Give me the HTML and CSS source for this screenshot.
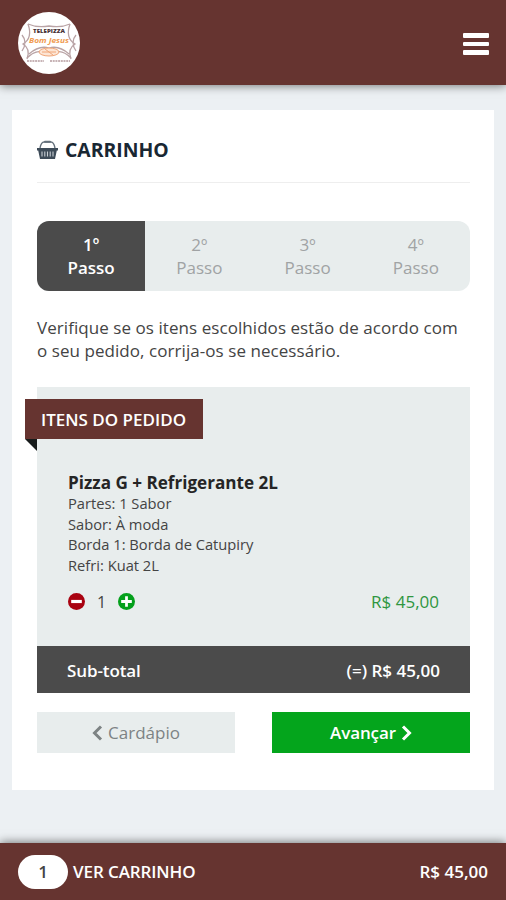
FILE: index.html
```html
<!DOCTYPE html>
<html lang="pt-br">

<head>
    <meta charset="utf-8">
    <title>Carrinho</title>
    <link rel="stylesheet" href="styles.css">
</head>

<body>
    <header class="topbar">
        <svg class="logo" viewBox="0 0 64 64">
            <circle cx="32" cy="32" r="31" fill="#fff"/>
            <g fill="none" stroke="#b9a3a5" stroke-width="1.3">
                <path d="M11 13 Q20 17 32 15 Q44 17 53 13"/>
                <path d="M11 13 Q16 27 6 33 Q14 38 10 48"/>
                <path d="M53 13 Q48 27 58 33 Q50 38 54 48"/>
                <path d="M5 24 Q11 31 5 40 M59 24 Q53 31 59 40"/>
                <path d="M12 43 Q22 34 32 37 Q42 34 52 43"/>
                <path d="M10 47 Q21 36 29 44 M54 47 Q43 36 35 44"/>
            </g>
            <ellipse cx="32" cy="41" rx="10" ry="4" fill="#fde5d4" stroke="#f0a678"/>
            <path d="M25 41h14M28 38l8 6" stroke="#f0a678"/>
            <text class="logo-top" x="32" y="22" textLength="32" lengthAdjust="spacingAndGlyphs" text-anchor="middle">TELEPIZZA</text>
            <text class="logo-name" x="32" y="32" textLength="40" lengthAdjust="spacingAndGlyphs" text-anchor="middle">Bom Jesus</text>
            <path d="M10 50h17M33 50h20" stroke="#b59b9e" stroke-width="1.6" stroke-dasharray="2 .7"/>
        </svg>
        <div class="menu">
            <span></span>
            <span></span>
            <span></span>
        </div>
    </header>

    <main class="cart">
        <h1>
            <svg class="basket" viewBox="0 0 21 20">
                <path d="M3 8C4 3 6 2 7 2h7c1 0 3 1 4 6" fill="none" stroke="#65717c" stroke-width="1.4"/>
                <rect x="7" y="0.7" width="7" height="2" rx="1" fill="#65717c"/>
                <path d="M0 8h21v2.4h-1.2L18 19H3L1.2 10.4H0z" fill="#3d4b58"/>
                <path d="M5 11.5v5M7.8 11.5v5M10.5 11.5v5M13.2 11.5v5M16 11.5v5" stroke="#c8ced3" stroke-width="1.1"/>
            </svg>
            <span>CARRINHO</span>
        </h1>

        <div class="steps">
            <div class="step active">1º<br>Passo</div>
            <div class="step">2º<br>Passo</div>
            <div class="step">3º<br>Passo</div>
            <div class="step">4º<br>Passo</div>
        </div>

        <p class="intro">Verifique se os itens escolhidos estão de acordo com o seu pedido, corrija-os se necessário.</p>

        <section class="order">
            <h2 class="ribbon"><span>ITENS DO PEDIDO</span></h2>
            <div class="item">
                <h3>Pizza G + Refrigerante 2L</h3>
                <ul>
                    <li>Partes: 1 Sabor</li>
                    <li>Sabor: À moda</li>
                    <li>Borda 1: Borda de Catupiry</li>
                    <li>Refri: Kuat 2L</li>
                </ul>
                <div class="item-row">
                    <div class="quantity">
                        <svg viewBox="0 0 16 16">
                            <circle cx="8" cy="8" r="8" fill="#a90311"/>
                            <path d="M3 8h10" stroke="#fff" stroke-width="3"/>
                        </svg>
                        <span>1</span>
                        <svg viewBox="0 0 16 16">
                            <circle cx="8" cy="8" r="8" fill="#04a01c"/>
                            <path d="M3 8h10M8 3v10" stroke="#fff" stroke-width="2.6"/>
                        </svg>
                    </div>
                    <span class="price">R$ 45,00</span>
                </div>
            </div>
            <div class="subtotal">
                <span class="subtotal-label">Sub-total</span>
                <span class="subtotal-value">(=) R$ 45,00</span>
            </div>
        </section>

        <div class="btn-group">
            <button class="back">
                <svg viewBox="0 0 11 16"><path d="M9 1.5L2.5 8L9 14.5"/></svg>
                <span>Cardápio</span>
            </button>
            <button class="next">
                <span>Avançar</span>
                <svg viewBox="0 0 11 16"><path d="M2 1.5L8.5 8L2 14.5"/></svg>
            </button>
        </div>
    </main>

    <footer class="bottombar">
        <span class="count">1</span>
        <span class="view-cart">VER CARRINHO</span>
        <span class="total">R$ 45,00</span>
    </footer>
</body>

</html>
```
FILE: styles.css
```css
* {
    box-sizing: border-box;
}

body {
    margin: 0;
    height: 900px;
    display: flex;
    flex-direction: column;
    overflow: hidden;
    background-color: #ecf0f3;
    font-family: "Open Sans", sans-serif;
    font-size: 17px;
    color: #444;
}

h1, h2, h3, p, ul {
    margin: 0;
    padding: 0;
}

svg {
    display: block;
    flex: none;
}

.topbar {
    height: 85px;
    flex: none;
    padding: 0 17px;
    display: flex;
    align-items: center;
    justify-content: space-between;
    background-color: #663430;
    box-shadow: 0 1px 9px rgba(0, 0, 0, 0.5);
}

.logo {
    width: 64px;
    height: 64px;
}

.logo-top {
    font-size: 5.5px;
    font-weight: 800;
    fill: #493236;
}

.logo-name {
    font-size: 7.5px;
    font-weight: 700;
    font-style: italic;
    fill: #f09a50;
}

.menu {
    width: 26px;
    display: flex;
    flex-direction: column;
    gap: 4px;
    margin-top: 3px;
}

.menu span {
    height: 4.5px;
    border-radius: 1px;
    background-color: #fff;
}

.cart {
    height: 680px;
    flex: none;
    margin: 25px 12px 0;
    padding: 0 24px 0 25px;
    background-color: #fff;
}

h1 {
    height: 73px;
    padding-top: 7px;
    display: flex;
    align-items: center;
    gap: 7px;
    border-bottom: 1px solid #eee;
    font-size: 19.4px;
    font-weight: 700;
    color: #192733;
}

.basket {
    width: 21px;
    height: 20px;
}

.steps {
    height: 70px;
    margin-top: 38px;
    display: grid;
    grid-template-columns: repeat(4, 1fr);
    border-radius: 12px;
    overflow: hidden;
    background-color: #e8eded;
}

.step {
    padding-top: 12px;
    text-align: center;
    line-height: 23px;
    color: #a0a3a4;
}

.step.active {
    background-color: #4b4b4b;
    color: #fff;
    font-weight: 600;
}

.intro {
    margin-top: 25px;
    padding-right: 8px;
    letter-spacing: 0.06px;
    line-height: 23px;
}

.order {
    height: 306px;
    margin-top: 25px;
    display: flex;
    flex-direction: column;
    background-color: #e8eded;
}

.ribbon {
    position: relative;
    width: 178px;
    height: 40px;
    flex: none;
    margin: 12px 0 0 -12px;
    padding-left: 16px;
    background-color: #663430;
    color: #fff;
    font-size: 17px;
    font-weight: 600;
    line-height: 41px;
    white-space: nowrap;
}

/* folded corner under the ribbon */
.ribbon::after {
    content: "";
    position: absolute;
    left: 0;
    top: 100%;
    border-top: 12px solid #171b1b;
    border-left: 12px solid transparent;
}

.item {
    flex: 1;
    padding: 33px 31px 0;
}

h3 {
    font-size: 17.1px;
    font-weight: 700;
    line-height: 21px;
    color: #252525;
    white-space: nowrap;
}

ul {
    list-style: none;
    font-size: 14.7px;
    line-height: 20.7px;
}

.item-row {
    margin-top: 14px;
    display: flex;
    align-items: center;
    justify-content: space-between;
    line-height: 24px;
}

.quantity {
    display: flex;
    align-items: center;
    gap: 12px;
    font-size: 16px;
}

.quantity svg {
    width: 17px;
    height: 17px;
}

.price {
    color: #2f963f;
}

.subtotal {
    height: 47px;
    flex: none;
    padding: 2px 30px 0;
    display: flex;
    align-items: center;
    justify-content: space-between;
    background-color: #4b4b4b;
    color: #fff;
    font-weight: 600;
}

.subtotal-label {
    letter-spacing: -0.1px;
}

.btn-group {
    margin-top: 19px;
    display: flex;
    justify-content: space-between;
}

.btn-group button {
    width: 198px;
    height: 41px;
    padding: 0;
    display: flex;
    align-items: center;
    justify-content: center;
    gap: 5px;
    border: none;
    font-family: inherit;
    font-size: 17px;
}

.btn-group svg {
    width: 11px;
    height: 16px;
    fill: none;
    stroke: currentColor;
    stroke-width: 3;
}

.btn-group .back {
    background-color: #e8eded;
    color: #7d8384;
}

.btn-group .next {
    background-color: #04a51c;
    color: #fff;
    font-weight: 600;
}

.btn-group .next span {
    letter-spacing: -0.1px;
}

.bottombar {
    height: 57px;
    flex: none;
    margin-top: auto;
    padding: 0 18px;
    display: flex;
    align-items: center;
    background-color: #663430;
    box-shadow: 0 -1px 9px rgba(0, 0, 0, 0.5);
    color: #fff;
    font-weight: 600;
}

.count {
    width: 50px;
    height: 34px;
    margin-right: 5px;
    border-radius: 17px;
    background-color: #fff;
    color: #444;
    text-align: center;
    line-height: 34px;
}

.view-cart {
    letter-spacing: -0.1px;
}

.total {
    margin-left: auto;
}
```
